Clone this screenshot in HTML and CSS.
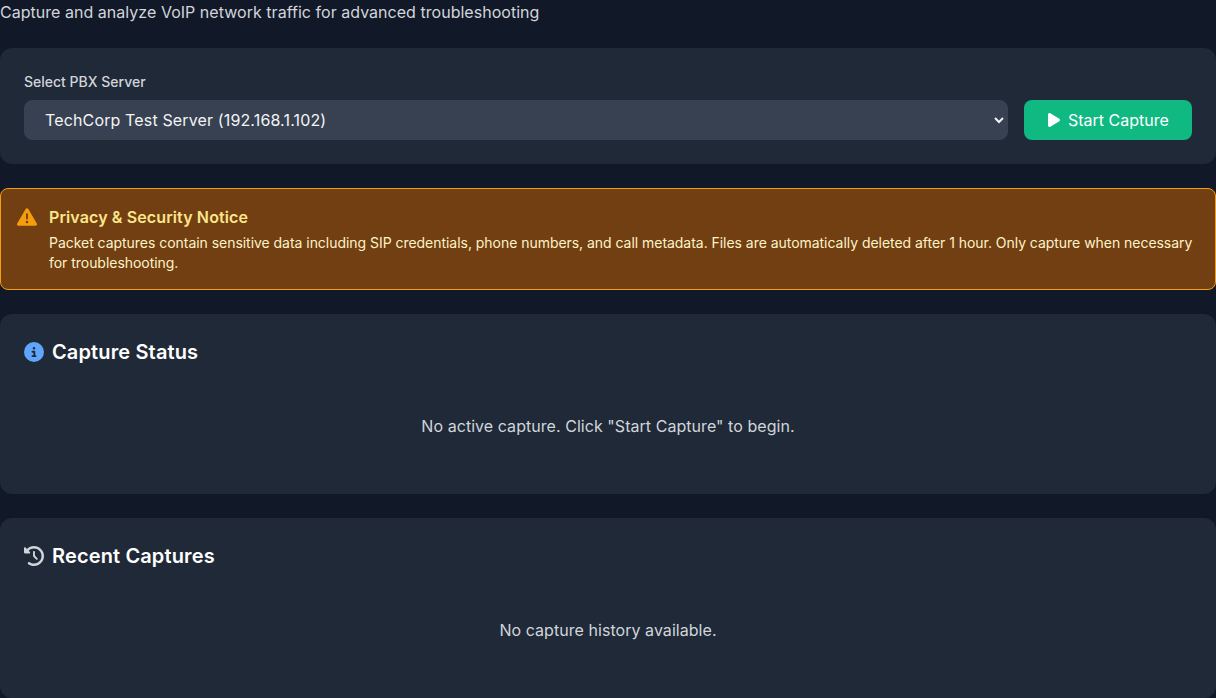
FILE: index.html
```html
<!DOCTYPE html>
<html lang="en">
<head>
<meta charset="utf-8">
<title>Packet Capture</title>
<link rel="stylesheet" href="styles.css">
</head>
<body>
<main class="page">
  <p class="subtitle">Capture and analyze VoIP network traffic for advanced troubleshooting</p>

  <section class="card">
    <label class="field-label" for="server">Select PBX Server</label>
    <div class="controls">
      <select class="server-select" id="server">
        <option>TechCorp Test Server (192.168.1.102)</option>
      </select>
      <button class="start-btn" type="button">
        <svg class="play-icon" viewBox="0 0 384 512" aria-hidden="true"><path d="M73 39c-14.8-9.1-33.4-9.4-48.5-.9S0 62.6 0 80V432c0 17.4 9.4 33.4 24.5 41.9s33.7 8.1 48.5-.9L361 297c14.3-8.7 23-24.2 23-41s-8.7-32.2-23-41L73 39z"/></svg>
        <span class="start-label">Start Capture</span>
      </button>
    </div>
  </section>

  <section class="notice">
    <svg class="notice-icon" viewBox="0 0 512 512" aria-hidden="true"><path d="M256 32c14.2 0 27.3 7.5 34.5 19.8l216 368c7.3 12.4 7.3 27.7 .2 40.1S486.3 480 472 480H40c-14.3 0-27.6-7.7-34.7-20.1s-7-27.8 .2-40.1l216-368C228.7 39.5 241.8 32 256 32zm0 128c-13.3 0-24 10.7-24 24V296c0 13.3 10.7 24 24 24s24-10.7 24-24V184c0-13.3-10.7-24-24-24zm32 224a32 32 0 1 0 -64 0 32 32 0 1 0 64 0z"/></svg>
    <div class="notice-body">
      <h2 class="notice-title">Privacy &amp; Security Notice</h2>
      <p class="notice-text">Packet captures contain sensitive data including SIP credentials, phone numbers, and call metadata. Files are automatically deleted after 1 hour. Only capture when necessary for troubleshooting.</p>
    </div>
  </section>

  <section class="card">
    <h2 class="card-title">
      <svg class="title-icon info" viewBox="0 0 512 512" aria-hidden="true"><path d="M256 512A256 256 0 1 0 256 0a256 256 0 1 0 0 512zM216 336h24V272H216c-13.3 0-24-10.7-24-24s10.7-24 24-24h48c13.3 0 24 10.7 24 24v88h8c13.3 0 24 10.7 24 24s-10.7 24-24 24H216c-13.3 0-24-10.7-24-24s10.7-24 24-24zm40-208a32 32 0 1 1 0 64 32 32 0 1 1 0-64z"/></svg>
      Capture Status
    </h2>
    <p class="empty">No active capture. Click "Start Capture" to begin.</p>
  </section>

  <section class="card">
    <h2 class="card-title">
      <svg class="title-icon history" viewBox="0 0 512 512" aria-hidden="true"><path d="M75 75L41 41C25.9 25.9 0 36.6 0 57.9V168c0 13.3 10.7 24 24 24H134.1c21.4 0 32.1-25.9 17-41l-30.8-30.8C155 85.5 203 64 256 64c106 0 192 86 192 192s-86 192-192 192c-40.8 0-78.6-12.7-109.7-34.4c-14.5-10.1-34.4-6.6-44.6 7.9s-6.6 34.4 7.9 44.6C151.2 495 201.7 512 256 512c141.4 0 256-114.6 256-256S397.4 0 256 0C185.3 0 121.3 28.7 75 75zm181 53c-13.3 0-24 10.7-24 24V256c0 6.4 2.5 12.5 7 17l72 72c9.4 9.4 24.6 9.4 33.9 0s9.4-24.6 0-33.9l-65-65V152c0-13.3-10.7-24-24-24z"/></svg>
      Recent Captures
    </h2>
    <p class="empty">No capture history available.</p>
  </section>
</main>
</body>
</html>
```
FILE: styles.css
```css
* { box-sizing: border-box; }
html, body { margin: 0; padding: 0; }
body {
  background: #111827;
  color: #d1d5db;
  font-family: Inter, "Liberation Sans", sans-serif;
  font-size: 16px;
  line-height: 24px;
  overflow: hidden;
}
.page { display: flex; flex-direction: column; gap: 24px; height: 698px; }
.subtitle { margin: 0; color: #d1d5db; letter-spacing: 0.03px; }
.card {
  background: #1f2937;
  border-radius: 12px;
  padding: 24px;
}
.field-label {
  display: block;
  font-size: 14px;
  line-height: 20px;
  font-weight: 500;
  color: #d1d5db;
  margin-bottom: 8px;
}
.controls { display: flex; gap: 16px; }
.server-select {
  flex: 1;
  min-width: 0;
  height: 40px;
  padding: 0 16px;
  border: 1px solid #374151;
  border-radius: 8px;
  background: #374151;
  color: #f3f4f6;
  font: inherit;
  letter-spacing: 0.14px;
}
.start-btn {
  display: flex;
  align-items: center;
  gap: 8px;
  width: 168px;
  height: 40px;
  padding: 0 24px;
  border: 0;
  border-radius: 8px;
  background: #10b981;
  color: #fff;
  font: inherit;
}
.start-label { white-space: nowrap; }
.play-icon { width: 12px; height: 16px; fill: currentColor; flex: none; }
.notice {
  display: flex;
  gap: 12px;
  padding: 16px;
  background: #713f12;
  border: 1px solid #f59e0b;
  border-radius: 8px;
}
.notice-icon { width: 20px; height: 20px; fill: #f59e0b; flex: none; margin-top: 2px; }
.notice-title {
  margin: 0;
  font-size: 16px;
  line-height: 24px;
  font-weight: 600;
  color: #fde68a;
  letter-spacing: 0.115px;
}
.notice-text {
  margin: 4px 0 0;
  font-size: 14px;
  line-height: 20px;
  color: #fef3c7;
  letter-spacing: -0.037px;
}
.card-title {
  display: flex;
  align-items: center;
  gap: 8px;
  margin: 0 0 16px;
  font-size: 20px;
  line-height: 28px;
  font-weight: 600;
  color: #fff;
  letter-spacing: 0.135px;
}
.title-icon { width: 20px; height: 20px; flex: none; }
.info { fill: #60a5fa; }
.history { fill: #d1d5db; }
.empty { margin: 0; padding: 32px 0; text-align: center; color: #d1d5db; letter-spacing: 0.05px; }
```
